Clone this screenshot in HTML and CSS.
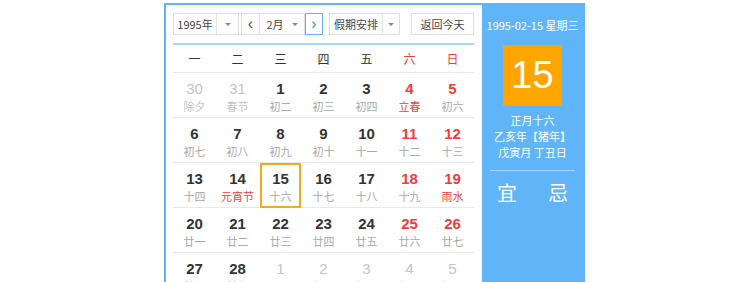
FILE: index.html
```html
<!DOCTYPE html>
<html>
<head>
<meta charset="utf-8">
<link rel="stylesheet" href="styles.css">
</head>
<body>
<div class="cal">
  <div class="main">
    <div class="toolbar">
      <div class="sel year"><span class="val">1995年</span><span class="arr"><i class="caret"></i></span></div>
      <div class="month">
        <span class="btn prev">&lsaquo;</span>
        <span class="sel msel"><span class="val">2月</span><span class="arr2"><i class="caret"></i></span></span>
        <span class="btn next">&rsaquo;</span>
      </div>
      <div class="sel hol"><span class="val">假期安排</span><span class="arr"><i class="caret"></i></span></div>
      <div class="today">返回今天</div>
    </div>
    <div class="grid">
      <div class="wk">一</div><div class="wk">二</div><div class="wk">三</div><div class="wk">四</div><div class="wk">五</div><div class="wk red">六</div><div class="wk red">日</div>

      <div class="d other"><b>30</b><span>除夕</span></div>
      <div class="d other"><b>31</b><span>春节</span></div>
      <div class="d"><b>1</b><span>初二</span></div>
      <div class="d"><b>2</b><span>初三</span></div>
      <div class="d"><b>3</b><span>初四</span></div>
      <div class="d we"><b>4</b><span class="fest">立春</span></div>
      <div class="d we"><b>5</b><span>初六</span></div>

      <div class="d"><b>6</b><span>初七</span></div>
      <div class="d"><b>7</b><span>初八</span></div>
      <div class="d"><b>8</b><span>初九</span></div>
      <div class="d"><b>9</b><span>初十</span></div>
      <div class="d"><b>10</b><span>十一</span></div>
      <div class="d we"><b>11</b><span>十二</span></div>
      <div class="d we"><b>12</b><span>十三</span></div>

      <div class="d"><b>13</b><span>十四</span></div>
      <div class="d"><b>14</b><span class="fest">元宵节</span></div>
      <div class="d cur"><b>15</b><span>十六</span></div>
      <div class="d"><b>16</b><span>十七</span></div>
      <div class="d"><b>17</b><span>十八</span></div>
      <div class="d we"><b>18</b><span>十九</span></div>
      <div class="d we"><b>19</b><span class="fest">雨水</span></div>

      <div class="d"><b>20</b><span>廿一</span></div>
      <div class="d"><b>21</b><span>廿二</span></div>
      <div class="d"><b>22</b><span>廿三</span></div>
      <div class="d"><b>23</b><span>廿四</span></div>
      <div class="d"><b>24</b><span>廿五</span></div>
      <div class="d we"><b>25</b><span>廿六</span></div>
      <div class="d we"><b>26</b><span>廿七</span></div>

      <div class="d"><b>27</b><span>廿八</span></div>
      <div class="d"><b>28</b><span>廿九</span></div>
      <div class="d other"><b>1</b><span>二月</span></div>
      <div class="d other"><b>2</b><span>初二</span></div>
      <div class="d other"><b>3</b><span>初三</span></div>
      <div class="d other"><b>4</b><span>初四</span></div>
      <div class="d other"><b>5</b><span>初五</span></div>
    </div>
  </div>
  <div class="side">
    <div class="sdate">1995-02-15 星期三</div>
    <div class="bigday">15</div>
    <div class="lunar">
      <div>正月十六</div>
      <div>乙亥年【猪年】</div>
      <div>戊寅月 丁丑日</div>
    </div>
    <div class="sep"></div>
    <div class="yj"><span>宜</span><span>忌</span></div>
  </div>
</div>
</body>
</html>
```
FILE: styles.css
```css
html, body {
  margin: 0;
  padding: 0;
  background: #fff;
  overflow: hidden;
}
body {
  font-family: "Noto Sans CJK SC", "Liberation Sans", sans-serif;
  font-size: 11px;
  color: #333;
}
.cal {
  display: flex;
  margin: 3px 0 0 164px;
  width: 421px;
  height: 320px;
  border: 2px solid #5fb5f7;
  border-bottom: none;
  box-sizing: border-box;
}
.main {
  width: 316px;
  box-sizing: border-box;
  padding: 8px 8px 0 7px;
  background: #fff;
}
.toolbar {
  display: flex;
  height: 22px;
  border-bottom: 2px solid #a9d5f7;
  padding-bottom: 8px;
}
.sel, .btn, .today {
  box-sizing: border-box;
  height: 22px;
  border: 1px solid #dedede;
  display: flex;
  align-items: center;
  background: #fff;
  color: #444;
  font-size: 11px;
  line-height: 20px;
}
.sel .val {
  flex: 1;
  text-align: center;
}
.arr {
  width: 21px;
  height: 20px;
  border-left: 1px solid #e3e3e3;
  display: flex;
  align-items: center;
  justify-content: center;
}
.arr2 {
  width: 18px;
  display: flex;
  align-items: center;
  justify-content: center;
}
.caret {
  width: 0;
  height: 0;
  border-left: 3px solid transparent;
  border-right: 3px solid transparent;
  border-top: 3px solid #888;
}
.year { width: 66px; }
.month {
  display: flex;
  margin-left: 2px;
  width: 82px;
}
.btn {
  width: 18px;
  justify-content: center;
  font-family: "Liberation Sans", sans-serif;
  font-size: 16px;
  color: #555;
}
.prev { width: 18px; border-right: none; }
.msel { width: 46px; padding-left: 4px; }
.next {
  border-color: #5fb5f7;
  color: #3a95e6;
}
.hol { width: 71px; margin-left: 6px; }
.hol .arr { width: 16px; }
.today {
  width: 63px;
  margin-left: 11px;
  justify-content: center;
}
.grid {
  display: grid;
  grid-template-columns: repeat(7, 43px);
}
.wk {
  height: 27px;
  line-height: 28px;
  text-align: center;
  font-size: 12px;
  color: #333;
  border-bottom: 1px solid #e8e8e8;
}
.wk.red { color: #f23b3b; }
.d {
  height: 45px;
  box-sizing: border-box;
  border-bottom: 1px solid #e8e8e8;
  padding-top: 7px;
  display: flex;
  flex-direction: column;
  align-items: center;
}
.d b {
  font-family: "Liberation Sans", sans-serif;
  font-size: 15px;
  font-weight: bold;
  line-height: 18px;
  color: #333;
}
.d span {
  font-size: 11px;
  line-height: 16px;
  color: #a8a8a8;
}
.d.we b { color: #f23b3b; }
.d span.fest { color: #f23b3b; }
.d.other b { color: #c4c4c4; font-weight: normal; }
.d.other span { color: #c4c4c4; }
.d.cur {
  border: 2px solid #f5aa1c;
  padding-top: 5px;
  margin: 0 1px 0 1px;
}
.side {
  flex: 1;
  background: #5fb5f7;
  color: #fff;
  text-align: center;
  padding-top: 12px;
}
.sdate {
  font-size: 11px;
  line-height: 16px;
}
.bigday {
  width: 59px;
  height: 61px;
  margin: 12px auto 0;
  background: #ffa500;
  font-family: "Liberation Sans", sans-serif;
  font-size: 38px;
  line-height: 61px;
  color: #fff;
}
.lunar {
  margin-top: 6px;
  font-size: 11px;
  line-height: 16px;
}
.sep {
  margin: 10px 8px 0;
  height: 1px;
  background: rgba(255, 255, 255, 0.45);
}
.yj {
  display: flex;
  justify-content: center;
  gap: 31px;
  margin-top: 10px;
  font-size: 20px;
  line-height: 24px;
}
```
